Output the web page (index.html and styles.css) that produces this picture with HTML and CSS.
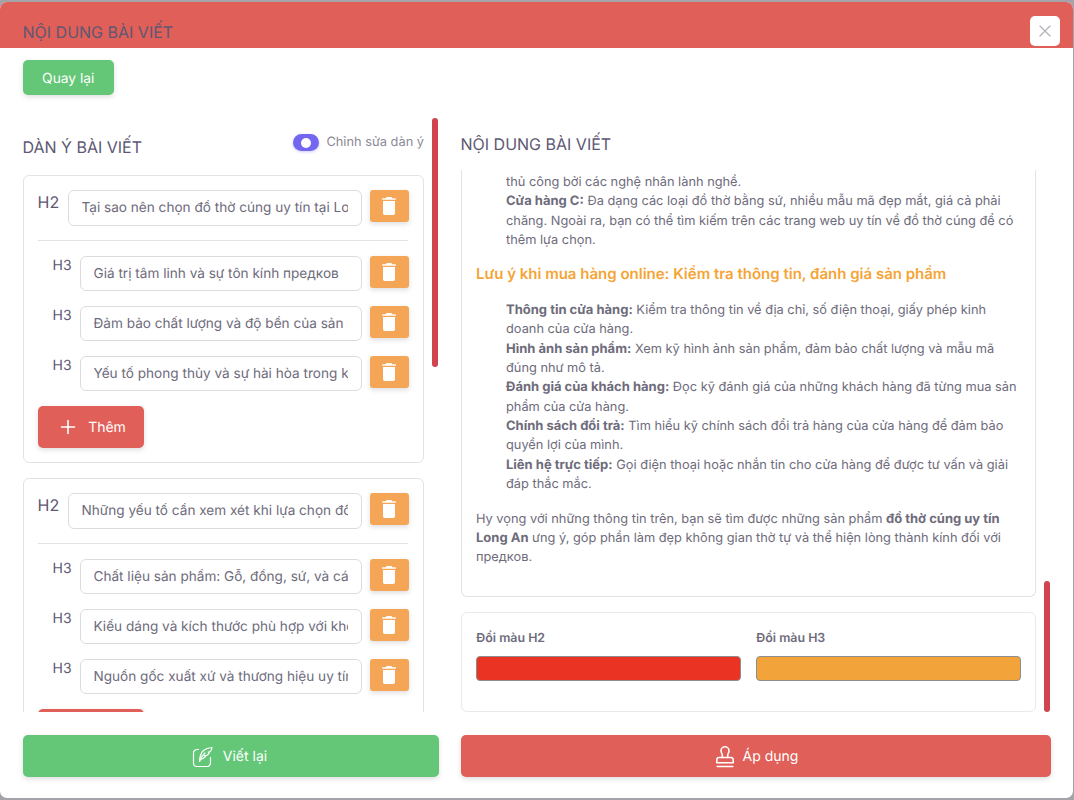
FILE: index.html
```html
<!DOCTYPE html>
<html lang="vi">
<head>
<meta charset="utf-8">
<title>Nội dung bài viết</title>
<link rel="stylesheet" href="styles.css">
</head>
<body>
<svg class="sprite" width="0" height="0" aria-hidden="true">
  <symbol id="trash" viewBox="0 0 14 18">
    <path fill="currentColor" d="M5 0h4c.5 0 .9.300 1 .8l.1.500h3.200c.4 0 .700.300.700.700s-.3.700-.7.700H.7C.3 2.700 0 2.400 0 2s.3-.7.700-.7h3.200L4 .8C4.100.3 4.500 0 5 0zM1 4h12v12.300c0 1-.8 1.700-1.700 1.700H2.700C1.800 18 1 17.300 1 16.300z"/>
  </symbol>
  <symbol id="plus" viewBox="0 0 16 16">
    <path d="M8 1.500v13M1.500 8h13" fill="none" stroke="currentColor" stroke-width="1.600" stroke-linecap="round"/>
  </symbol>
</svg>
<div class="modal">
  <header class="modal-head">
    <h1 class="modal-title">NỘI DUNG BÀI VIẾT</h1>
    <button class="close" type="button" aria-label="Đóng">
      <svg viewBox="0 0 14 14" width="14" height="14"><path d="M2 2l10 10M12 2L2 12" fill="none" stroke="currentColor" stroke-width="1.300" stroke-linecap="round"/></svg>
    </button>
  </header>
  <div class="toolbar"><button class="btn btn-green btn-back" type="button">Quay lại</button></div>
  <div class="columns">
    <section class="col-left">
      <span class="scroll-thumb left-thumb"></span>
      <div class="left-head">
        <h2 class="section-title">DÀN Ý BÀI VIẾT</h2>
        <label class="switch-wrap"><span class="switch"><span class="knob"></span></span><span class="switch-label">Chỉnh sửa dàn ý</span></label>
      </div>
      <div class="outline">
        <div class="card">
          <div class="row row-h2"><span class="tag tag-h2">H2</span><input class="field" value="Tại sao nên chọn đồ thờ cúng uy tín tại Long An?"><button class="trash" type="button"><svg><use href="#trash"/></svg></button></div>
          <hr class="divider">
          <div class="row row-h3"><span class="tag">H3</span><input class="field" value="Giá trị tâm linh và sự tôn kính предков"><button class="trash" type="button"><svg><use href="#trash"/></svg></button></div>
          <div class="row row-h3"><span class="tag">H3</span><input class="field" value="Đảm bảo chất lượng và độ bền của sản phẩm"><button class="trash" type="button"><svg><use href="#trash"/></svg></button></div>
          <div class="row row-h3"><span class="tag">H3</span><input class="field" value="Yếu tố phong thủy và sự hài hòa trong không gian"><button class="trash" type="button"><svg><use href="#trash"/></svg></button></div>
          <button class="btn btn-red btn-add" type="button"><svg width="16" height="16"><use href="#plus"/></svg>Thêm</button>
        </div>
        <div class="card">
          <div class="row row-h2"><span class="tag tag-h2">H2</span><input class="field" value="Những yếu tố cần xem xét khi lựa chọn đồ thờ cúng"><button class="trash" type="button"><svg><use href="#trash"/></svg></button></div>
          <hr class="divider">
          <div class="row row-h3"><span class="tag">H3</span><input class="field" value="Chất liệu sản phẩm: Gỗ, đồng, sứ, và các loại khác"><button class="trash" type="button"><svg><use href="#trash"/></svg></button></div>
          <div class="row row-h3"><span class="tag">H3</span><input class="field" value="Kiểu dáng và kích thước phù hợp với không gian"><button class="trash" type="button"><svg><use href="#trash"/></svg></button></div>
          <div class="row row-h3"><span class="tag">H3</span><input class="field" value="Nguồn gốc xuất xứ và thương hiệu uy tín trên thị trường"><button class="trash" type="button"><svg><use href="#trash"/></svg></button></div>
          <button class="btn btn-red btn-add" type="button"><svg width="16" height="16"><use href="#plus"/></svg>Thêm</button>
        </div>
      </div>
    </section>
    <section class="col-right">
      <span class="scroll-thumb right-thumb"></span>
      <h2 class="section-title right-title">NỘI DUNG BÀI VIẾT</h2>
      <article class="content">
        <div class="indent">
          <p>thủ công bởi các nghệ nhân lành nghề.</p>
          <p><b>Cửa hàng C:</b> Đa dạng các loại đồ thờ bằng sứ, nhiều mẫu mã đẹp mắt, giá cả phải chăng. Ngoài ra, bạn có thể tìm kiếm trên các trang web uy tín về đồ thờ cúng để có thêm lựa chọn.</p>
        </div>
        <h3 class="h3-orange">Lưu ý khi mua hàng online: Kiểm tra thông tin, đánh giá sản phẩm</h3>
        <div class="indent">
          <p><b>Thông tin cửa hàng:</b> Kiểm tra thông tin về địa chỉ, số điện thoại, giấy phép kinh doanh của cửa hàng.</p>
          <p><b>Hình ảnh sản phẩm:</b> Xem kỹ hình ảnh sản phẩm, đảm bảo chất lượng và mẫu mã đúng như mô tả.</p>
          <p><b>Đánh giá của khách hàng:</b> Đọc kỹ đánh giá của những khách hàng đã từng mua sản phẩm của cửa hàng.</p>
          <p><b>Chính sách đổi trả:</b> Tìm hiểu kỹ chính sách đổi trả hàng của cửa hàng để đảm bảo quyền lợi của mình.</p>
          <p><b>Liên hệ trực tiếp:</b> Gọi điện thoại hoặc nhắn tin cho cửa hàng để được tư vấn và giải đáp thắc mắc.</p>
        </div>
        <p class="closing">Hy vọng với những thông tin trên, bạn sẽ tìm được những sản phẩm <b>đồ thờ cúng uy tín Long An</b> ưng ý, góp phần làm đẹp không gian thờ tự và thể hiện lòng thành kính đối với предков.</p>
      </article>
      <div class="colors">
        <div class="color-item"><span class="color-label">Đổi màu H2</span><span class="swatch swatch-red"></span></div>
        <div class="color-item"><span class="color-label">Đổi màu H3</span><span class="swatch swatch-orange"></span></div>
      </div>
    </section>
  </div>
  <footer class="actions">
    <button class="btn btn-green btn-wide btn-rewrite" type="button">
      <svg viewBox="0 0 22 22" width="22" height="22" fill="none" stroke="currentColor" stroke-width="1.200" stroke-linecap="round" stroke-linejoin="round"><path d="M6.500 3.500H5A3.500 3.500 0 0 0 1.500 7v10A3.500 3.500 0 0 0 5 20.500h10a3.500 3.500 0 0 0 3.500-3.500v-5.500"/><path d="M7.500 15.500c.2-4.500 1.300-8.500 4-11 2.300-2 5.500-2.800 8.500-3-.2 1.800-.8 3.200-1.800 4.200l-2 .3 1 .8c-.7 1.400-1.700 2.300-2.900 2.800l-2 .1 1 1c-1.400 1.800-3 2.600-5.300 2.800"/><path d="M7.500 15.500c1-3 2.700-6 5.500-8.500"/></svg>
      Viết lại
    </button>
    <button class="btn btn-red btn-wide btn-apply" type="button">
      <svg viewBox="0 0 18 22" width="18" height="22" fill="none" stroke="currentColor" stroke-width="1.600" stroke-linecap="round" stroke-linejoin="round"><path d="M6.300 11.500V9.200C6.300 8 5 6.700 5 4.800a4 4 0 0 1 8 0c0 1.900-1.300 3.200-1.300 4.400v2.300"/><path d="M3 11.500h12a2.200 2.200 0 0 1 2.200 2.200v3H.8v-3A2.200 2.200 0 0 1 3 11.500z"/><path d="M1.200 20.500h15.600"/></svg>
      Áp dụng
    </button>
  </footer>
</div>
</body>
</html>
```
FILE: styles.css
```css
* { box-sizing: border-box; }
html, body { margin: 0; height: 800px; overflow: hidden; }
body {
  background: #a5a3aa;
  padding: 2px 1px 2px 0;
  font-family: Inter, "Noto Sans", sans-serif;
  font-size: 12.800px;
  color: #6e6b7b;
  text-rendering: geometricPrecision;
}
.sprite { position: absolute; }
.modal {
  height: 796px;
  background: #fff;
  border-radius: 7px;
  overflow: hidden;
  display: flex;
  flex-direction: column;
}
.modal-head {
  height: 46px;
  flex: none;
  background: #e05f58;
  position: relative;
  padding: 20px 22.500px 0;
}
.modal-title {
  margin: 0;
  font-size: 16px;
  font-weight: 400;
  line-height: 21px;
  color: #5e5873;
}
.close {
  position: absolute;
  right: 13px;
  top: 14px;
  width: 30px;
  height: 30px;
  padding: 0;
  border: 0;
  border-radius: 5px;
  background: #fff;
  color: #b4b3bb;
  display: flex;
  align-items: center;
  justify-content: center;
}
.toolbar { height: 70px; flex: none; padding: 12px 22.500px 0; }
.btn {
  border: 0;
  border-radius: 5px;
  color: #fff;
  font-family: inherit;
  font-size: 14px;
  text-rendering: geometricPrecision;
  display: flex;
  align-items: center;
  justify-content: center;
  box-shadow: 0 2px 5px rgba(70, 70, 90, .18);
}
.btn-green { background: #63c777; }
.btn-red { background: #e05f58; }
.btn-back { width: 91.500px; height: 35px; padding: 2px 0 0; font-size: 13.800px; }
.columns { height: 594px; flex: none; display: flex; padding-left: 22.500px; }
.col-left { width: 415px; position: relative; flex: none; overflow: hidden; }
.left-head {
  width: 401.500px;
  height: 56.500px;
  display: flex;
  justify-content: space-between;
  padding-top: 16px;
}
.section-title {
  margin: 0;
  font-size: 16px;
  font-weight: 400;
  line-height: 26px;
  color: #5e5873;
}
.switch-wrap { display: flex; align-items: flex-start; gap: 7px; }
.switch {
  width: 26px;
  height: 17px;
  border-radius: 9px;
  background: #7367f0;
  display: flex;
  align-items: center;
  justify-content: center;
  box-shadow: 0 1px 3px rgba(115, 103, 240, .35);
}
.knob { width: 10px; height: 10px; border-radius: 50%; background: #fff; }
.switch-label { font-size: 12.800px; line-height: 17px; color: #8b8996; }
.outline { width: 401.500px; }
.card {
  height: 288px;
  margin-bottom: 15px;
  padding: 14.500px 15px 0 14px;
  border: 1px solid #e3e2e6;
  border-radius: 6px;
}
.row { display: flex; align-items: flex-start; }
.tag { flex: none; font-size: 14px; line-height: 20px; color: #5e5873; }
.tag-h2 { width: 30px; font-size: 16px; line-height: 24px; }
.row-h3 { padding-left: 15px; height: 50px; }
.row-h3 .tag { width: 27px; }
.field {
  flex: none;
  width: 294px;
  height: 36px;
  padding: 0 13px;
  border: 1px solid #dcdbe0;
  border-radius: 6px;
  background: #fff;
  font-family: inherit;
  font-size: 13.600px;
  color: #6e6b7b;
  text-rendering: geometricPrecision;
}
.row-h3 .field { width: 282px; height: 35px; }
.trash {
  flex: none;
  margin-left: 8px;
  width: 39px;
  height: 32px;
  padding: 0;
  border: 0;
  border-radius: 3px;
  background: #f4a556;
  color: #fff;
  box-shadow: 0 2px 5px rgba(70, 70, 90, .18);
  display: flex;
  align-items: center;
  justify-content: center;
}
.trash svg { width: 14px; height: 18px; }
.divider { margin: 14px 0 15px; border: 0; border-top: 1px solid #e3e2e6; }
.btn-add {
  width: 106px;
  height: 42px;
  gap: 12px;
  padding: 0 0 0 5px;
}
.col-right { width: 590px; flex: none; position: relative; margin-left: 23px; }
.right-title { height: 52px; padding-top: 13px; }
.content {
  width: 575px;
  height: 427px;
  padding: 3px 15px 0 14.500px;
  border: 1px solid #e3e2e6;
  border-top: 0;
  border-radius: 0 0 6px 6px;
  line-height: 19.350px;
  overflow: hidden;
}
.content p { margin: 0; }
.content b { font-weight: 700; font-size: 13px; color: #6e6b7b; }
.indent { padding-left: 30px; }
.h3-orange {
  margin: 12.400px 0 16.300px;
  font-size: 15px;
  font-weight: 600;
  line-height: 22px;
  color: #f5a436;
}
.content .closing { margin-top: 15px; }
.colors {
  width: 575px;
  height: 100px;
  margin-top: 15px;
  padding: 17px 13px 0 14.800px;
  border: 1px solid #e9e8ec;
  border-radius: 6px;
  display: flex;
  gap: 15px;
}
.color-item { width: 265px; flex: none; display: flex; flex-direction: column; }
.color-label { font-size: 12.400px; font-weight: 600; line-height: 16px; height: 26px; color: #6e6b7b; }
.swatch { height: 25px; border: 1px solid #8d8d8d; border-radius: 4px; }
.swatch-red { background: #ea3323; }
.swatch-orange { background: #f2a33a; }
.scroll-thumb { position: absolute; width: 6px; border-radius: 3px; background: #d0444f; }
.left-thumb { left: 409px; top: 0; height: 249px; }
.right-thumb { left: 583.500px; top: 463px; height: 131px; }
.actions { height: 86px; flex: none; display: flex; padding: 22.500px 0 0 22.500px; gap: 22px; }
.btn-wide { height: 42px; gap: 9px; }
.btn-rewrite { width: 416px; padding: 2px 8px 0 6px; }
.btn-apply { width: 590px; padding: 2px 6px 0 9px; }
```
